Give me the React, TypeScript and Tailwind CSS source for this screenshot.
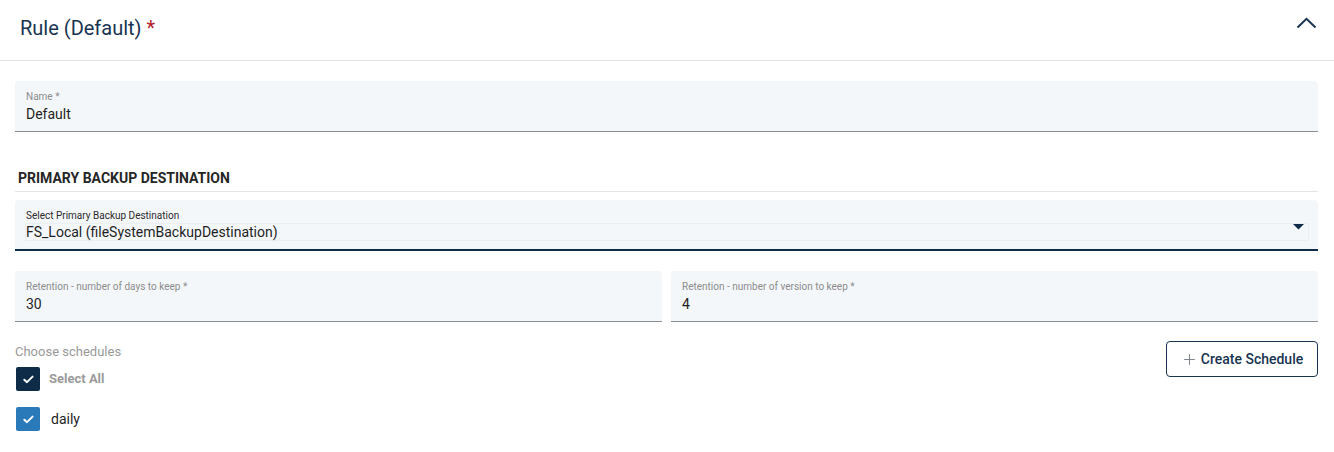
import { Plus } from 'lucide-react';

function Field({ label, value, className = '' }: { label: string; value: string; className?: string }) {
    return (
        <div className={`h-[51px] bg-[#f4f7fa] rounded-t-[4px] border-b border-[#8a8f94] px-[11px] pt-[10px] ${className}`}>
            <div className="text-[10px] leading-[12px] text-[#8c8c8c]">{label}</div>
            <div className="text-[14px] leading-[20px] mt-[1px] text-[#1f1f1f]">{value}</div>
        </div>
    );
}

function Check({ dark }: { dark?: boolean }) {
    return (
        <span className={`w-6 h-6 rounded-[2px] flex items-center justify-center ${dark ? 'bg-[#0e2b47]' : 'bg-[#2a79b9]'}`}>
            <svg width="11" height="9" viewBox="0 0 11 9" fill="none">
                <path d="M1.3 4.7 L4 7.2 L9.6 1.6" stroke="white" strokeWidth="1.9" strokeLinecap="round" strokeLinejoin="round" />
            </svg>
        </span>
    );
}

export default function App() {
    return (
        <div className="w-[1334px] h-[452px] bg-white overflow-hidden" style={{ fontFamily: 'Roboto, "Noto Sans", sans-serif' }}>
            {/* Header */}
            <div className="h-[61px] border-b border-[#e2e2e2] flex items-center justify-between pl-[20px] pr-[17px]">
                <h2 className="text-[20px] leading-[24px] text-[#183451] mb-[4px]">
                    Rule (Default) <span className="text-[#b3222a]">*</span>
                </h2>
                <svg width="21" height="12" viewBox="0 0 21 12" fill="none" className="mb-[14px]">
                    <path d="M1.5 10.5 L10.5 1.8 L19.5 10.5" stroke="#183451" strokeWidth="2" />
                </svg>
            </div>

            <div className="pl-[15px] pr-[16px] pt-[20px]">
                <Field label="Name *" value="Default" />

                <div className="mt-[38px] border-b border-[#e4e4e4] pb-[5px] pl-[3px] text-[14px] leading-[16px] font-bold text-[#262626]">
                    PRIMARY BACKUP DESTINATION
                </div>

                <div className="mt-[8px] h-[51px] bg-[#f4f7fa] rounded-t-[4px] border-b-2 border-[#0e2b47] pl-[11px] pr-[9px] pt-[10px]">
                    <div className="text-[10px] leading-[12px] text-[#2b2b2b]">Select Primary Backup Destination</div>
                    <div className="flex items-center justify-between border border-[#eceff2] -ml-[1px] h-[18px] mt-[1px]">
                        <span className="text-[14px] leading-[18px] text-[#1f1f1f]">FS_Local (fileSystemBackupDestination)</span>
                        <svg width="11" height="6" viewBox="0 0 11 6" className="mr-[4px] -mt-[10px]">
                            <path d="M0 0 L11 0 L5.5 5.5 Z" fill="#0e2b47" />
                        </svg>
                    </div>
                </div>

                <div className="mt-[20px] grid grid-cols-2 gap-[9px]">
                    <Field label="Retention - number of days to keep *" value="30" />
                    <Field label="Retention - number of version to keep *" value="4" />
                </div>

                <div className="mt-[21px] flex justify-between items-start">
                    <div>
                        <div className="text-[13px] leading-[18px] text-[#9a9a9a]">Choose schedules</div>
                        <div className="mt-[6px] flex items-center gap-[9px] pl-[1px]">
                            <Check dark />
                            <span className="text-[13px] font-bold text-[#9a9a9a]">Select All</span>
                        </div>
                        <div className="mt-[16px] flex items-center gap-[11px] pl-[1px]">
                            <Check />
                            <span className="text-[14px] text-[#1f1f1f]">daily</span>
                        </div>
                    </div>
                    <button className="mt-[-2px] h-[36px] w-[152px] border border-[#183451] rounded-[4px] flex items-center justify-center gap-[3px] text-[14px] font-medium text-[#183451]">
                        <Plus size={17} strokeWidth={1.4} className="text-[#7a8590]" />
                        Create Schedule
                    </button>
                </div>
            </div>
        </div>
    );
}
